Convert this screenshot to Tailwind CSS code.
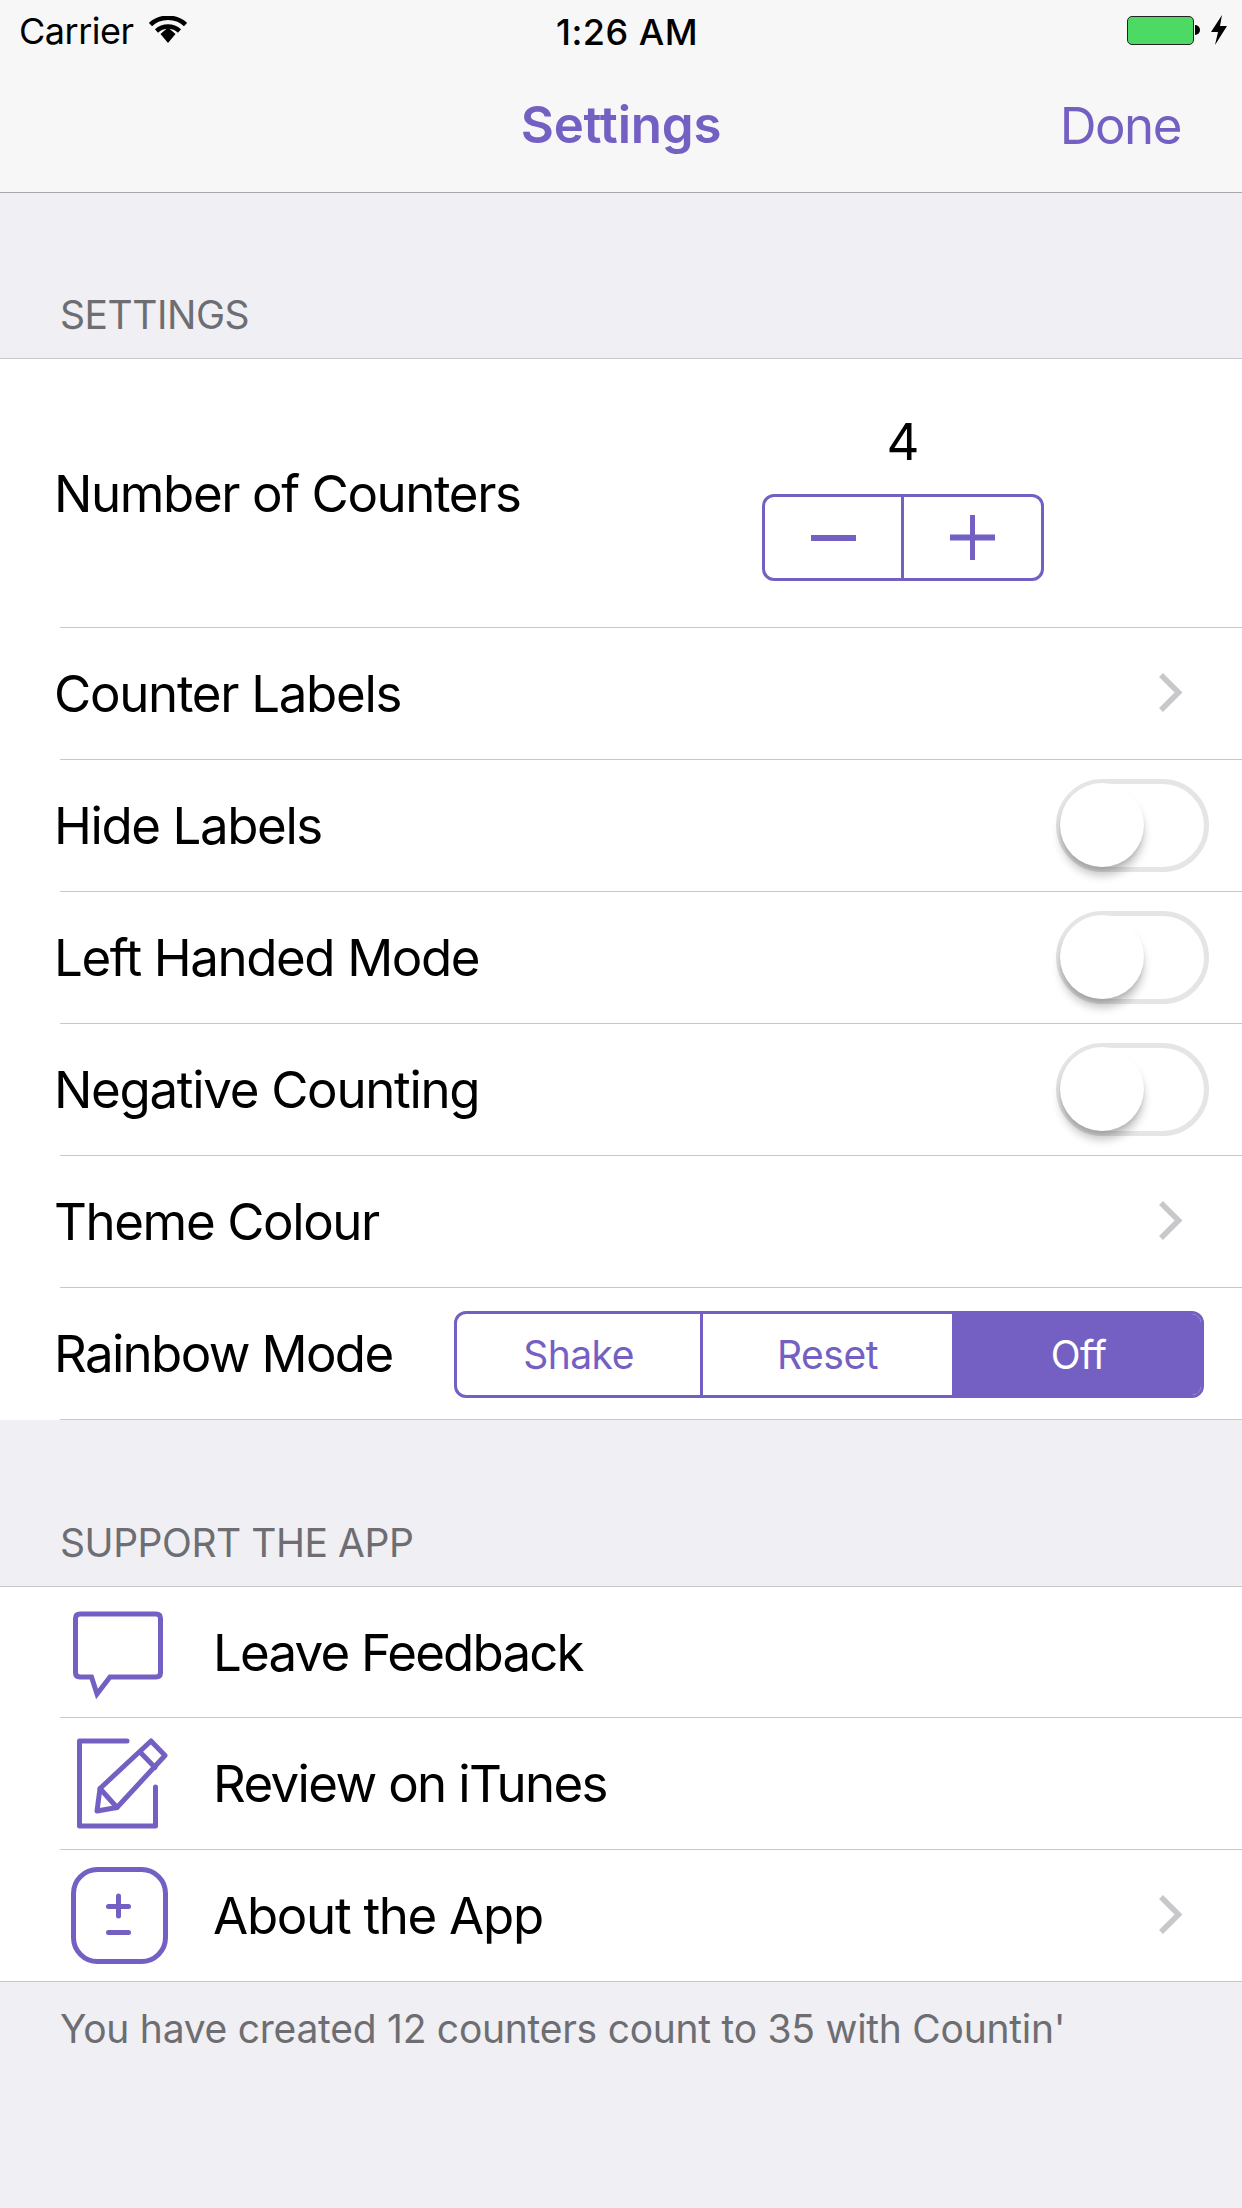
<!DOCTYPE html>
<html lang="en">
<head>
    <meta charset="UTF-8">
    <title>Settings</title>
    <script src="https://cdn.jsdelivr.net/npm/@tailwindcss/browser@4"></script>
</head>
<body class="bg-[#efeff4] font-['Inter','Liberation_Sans',sans-serif] text-black w-[1242px] h-[2208px] overflow-hidden">
    <!-- Status bar + nav -->
    <header class="h-[193px] bg-[#f7f7f8] border-b border-[#a7a7aa] flex flex-col">
        <div class="h-[60px] relative flex items-center justify-between pl-[19px] pr-[15px]">
            <div class="flex items-center gap-[15px]">
                <span class="text-[36px] leading-none tracking-[-0.5px] mt-[2px]">Carrier</span>
                <svg class="w-[38px] h-[28px]" viewBox="0 0 38 28" fill="none" stroke="#000" stroke-width="4.5">
                    <path d="M1.5 8.5 C11 -0.5 27 -0.5 36.5 8.5"/>
                    <path d="M7.5 15 C14 9 24 9 30.5 15"/>
                    <path d="M11.5 18 L19 11.5 L26.5 18 L19 27 Z" fill="#000" stroke="none"/>
                </svg>
            </div>
            <span class="absolute left-[556px] top-[14px] text-[36px] font-medium leading-none tracking-[0.5px]">1:26 AM</span>
            <div class="flex items-center">
                <div class="w-[67px] h-[29px] rounded-[5px] border border-[#222] bg-[#4cd964]"></div>
                <div class="w-[5px] h-[10px] bg-black rounded-r-full ml-[1px]"></div>
                <svg class="w-[16px] h-[30px] ml-[11px]" viewBox="0 0 16 30"><path d="M11 0 L0 17 L7 17 L4 30 L16 11 L9 11 Z" fill="#000"/></svg>
            </div>
        </div>
        <div class="flex-1 relative flex items-center justify-center pb-[4px]">
            <span class="text-[51px] font-semibold text-[#7460c2] leading-none tracking-[-0.2px]">Settings</span>
            <span class="absolute right-[61px] top-[40px] text-[51px] text-[#7460c2] leading-none tracking-[-1.5px]">Done</span>
        </div>
    </header>

    <!-- Settings section -->
    <h2 class="h-[166px] flex items-end pb-[24px] pl-[60px] text-[39px] leading-none tracking-[-0.45px] text-[#6d6d72] border-b border-[#c8c7cc]">SETTINGS</h2>
    <section class="bg-white">
        <div class="pl-[60px]">
            <div class="h-[269px] border-b border-[#c8c7cc] flex items-center justify-between relative">
                <span class="-ml-[6px] text-[51px] leading-none tracking-[-1.4px]">Number of Counters</span>
                <div class="absolute left-[702px] top-[57px] flex flex-col">
                    <span class="text-[51px] leading-none text-center mb-[27px]">4</span>
                    <div class="w-[282px] h-[87px] rounded-[12px] border-[3px] border-[#7460c2] flex">
                        <div class="w-[139px] border-r-[3px] border-[#7460c2] flex items-center justify-center">
                            <div class="w-[45px] h-[6px] bg-[#7460c2]"></div>
                        </div>
                        <div class="flex-1 flex items-center justify-center">
                            <svg class="w-[45px] h-[45px]" viewBox="0 0 45 45" fill="#7460c2"><rect x="0" y="19.5" width="45" height="6"/><rect x="20" y="0" width="5" height="45"/></svg>
                        </div>
                    </div>
                </div>
            </div>
            <div class="h-[132px] border-b border-[#c8c7cc] flex items-center justify-between pr-[60px]">
                <span class="-ml-[6px] text-[51px] leading-none tracking-[-1.3px]">Counter Labels</span>
                <svg class="w-[23px] h-[39px] -mt-[2px]" viewBox="0 0 23 39" fill="none" stroke="#c7c7cc" stroke-width="5.5"><path d="M2 2 L19.5 19.5 L2 37"/></svg>
            </div>
            <div class="h-[132px] border-b border-[#c8c7cc] flex items-center justify-between pr-[33px]">
                <span class="-ml-[6px] text-[51px] leading-none tracking-[-1.4px]">Hide Labels</span>
                <div class="relative w-[153px] h-[93px] rounded-full border-[5px] border-[#e5e5e5] bg-white">
                    <div class="absolute -left-[1px] -top-[1px] w-[84px] h-[84px] rounded-full bg-white shadow-[0_9px_9px_rgba(0,0,0,0.22),0_3px_3px_rgba(0,0,0,0.08)]"></div>
                </div>
            </div>
            <div class="h-[132px] border-b border-[#c8c7cc] flex items-center justify-between pr-[33px]">
                <span class="-ml-[6px] text-[51px] leading-none tracking-[-1.4px]">Left Handed Mode</span>
                <div class="relative w-[153px] h-[93px] rounded-full border-[5px] border-[#e5e5e5] bg-white">
                    <div class="absolute -left-[1px] -top-[1px] w-[84px] h-[84px] rounded-full bg-white shadow-[0_9px_9px_rgba(0,0,0,0.22),0_3px_3px_rgba(0,0,0,0.08)]"></div>
                </div>
            </div>
            <div class="h-[132px] border-b border-[#c8c7cc] flex items-center justify-between pr-[33px]">
                <span class="-ml-[6px] text-[51px] leading-none tracking-[-1.3px]">Negative Counting</span>
                <div class="relative w-[153px] h-[93px] rounded-full border-[5px] border-[#e5e5e5] bg-white">
                    <div class="absolute -left-[1px] -top-[1px] w-[84px] h-[84px] rounded-full bg-white shadow-[0_9px_9px_rgba(0,0,0,0.22),0_3px_3px_rgba(0,0,0,0.08)]"></div>
                </div>
            </div>
            <div class="h-[132px] border-b border-[#c8c7cc] flex items-center justify-between pr-[60px]">
                <span class="-ml-[6px] text-[51px] leading-none tracking-[-1.4px]">Theme Colour</span>
                <svg class="w-[23px] h-[39px] -mt-[2px]" viewBox="0 0 23 39" fill="none" stroke="#c7c7cc" stroke-width="5.5"><path d="M2 2 L19.5 19.5 L2 37"/></svg>
            </div>
            <div class="h-[132px] border-b border-[#c8c7cc] flex items-center justify-between pr-[38px]">
                <span class="-ml-[6px] text-[51px] leading-none tracking-[-1.65px]">Rainbow Mode</span>
                <div class="w-[750px] h-[87px] mt-[2px] rounded-[12px] border-[3px] border-[#7460c2] flex text-[39px] tracking-[-0.5px] text-[#7460c2] overflow-hidden">
                    <div class="w-[246px] border-r-[3px] border-[#7460c2] flex items-center justify-center pt-[2px]">Shake</div>
                    <div class="w-[249px] flex items-center justify-center pt-[2px]">Reset</div>
                    <div class="flex-1 bg-[#7460c2] text-white flex items-center justify-center pt-[2px] pl-[4px]">Off</div>
                </div>
            </div>
        </div>
    </section>

    <!-- Support section -->
    <h2 class="h-[167px] flex items-end pb-[24px] pl-[60px] text-[39px] leading-none tracking-[-0.45px] text-[#6d6d72] border-b border-[#c8c7cc]">SUPPORT THE APP</h2>
    <section class="bg-white border-b border-[#c8c7cc]">
        <div class="pl-[60px]">
            <div class="h-[131px] border-b border-[#c8c7cc] flex items-center">
                <svg class="w-[96px] h-[96px] ml-[10px] shrink-0" viewBox="0 0 96 96" fill="none" stroke="#7460c2" stroke-width="5">
                    <path d="M10 10 H86 Q90.500 10 90.500 14.500 V68.500 Q90.500 73 86 73 H40 L27 90 L21.500 73 H10 Q5.500 73 5.500 68.500 V14.500 Q5.500 10 10 10 Z"/>
                </svg>
                <span class="ml-[47px] text-[51px] leading-none tracking-[-1.8px]">Leave Feedback</span>
            </div>
            <div class="h-[132px] border-b border-[#c8c7cc] flex items-center">
                <svg class="w-[100px] h-[96px] ml-[10px] shrink-0" viewBox="0 0 100 96" fill="none" stroke="#7460c2" stroke-width="5" stroke-linecap="round" stroke-linejoin="round">
                    <path d="M57 5 H9.500 V90 H85.500 V51"/>
                    <path d="M30 52.500 L81 5 L95 19.500 L47 71.500 L27 75 Z"/>
                    <path d="M30 52.500 L47 71.500"/>
                    <path d="M70 16 L85 31.500"/>
                </svg>
                <span class="ml-[43px] text-[51px] leading-none tracking-[-1.65px]">Review on iTunes</span>
            </div>
            <div class="h-[131px] flex items-center justify-between pr-[60px]">
                <div class="flex items-center">
                    <svg class="w-[98px] h-[98px] ml-[10px] shrink-0" viewBox="0 0 98 98" fill="none" stroke="#7460c2" stroke-width="5" stroke-linecap="round">
                        <rect x="3.500" y="2.500" width="92" height="92" rx="24"/>
                        <path d="M38.500 39.500 H58.500 M48.500 29 V49 M38.500 65.500 H58.500"/>
                    </svg>
                    <span class="ml-[45px] text-[51px] leading-none tracking-[-1.3px]">About the App</span>
                </div>
                <svg class="w-[23px] h-[39px] -mt-[2px]" viewBox="0 0 23 39" fill="none" stroke="#c7c7cc" stroke-width="5.5"><path d="M2 2 L19.5 19.5 L2 37"/></svg>
            </div>
        </div>
    </section>
    <p class="pl-[60px] pt-[27px] text-[39px] leading-none tracking-[-0.26px] text-[#6d6d72]">You have created 12 counters count to 35 with Countin'</p>
</body>
</html>
